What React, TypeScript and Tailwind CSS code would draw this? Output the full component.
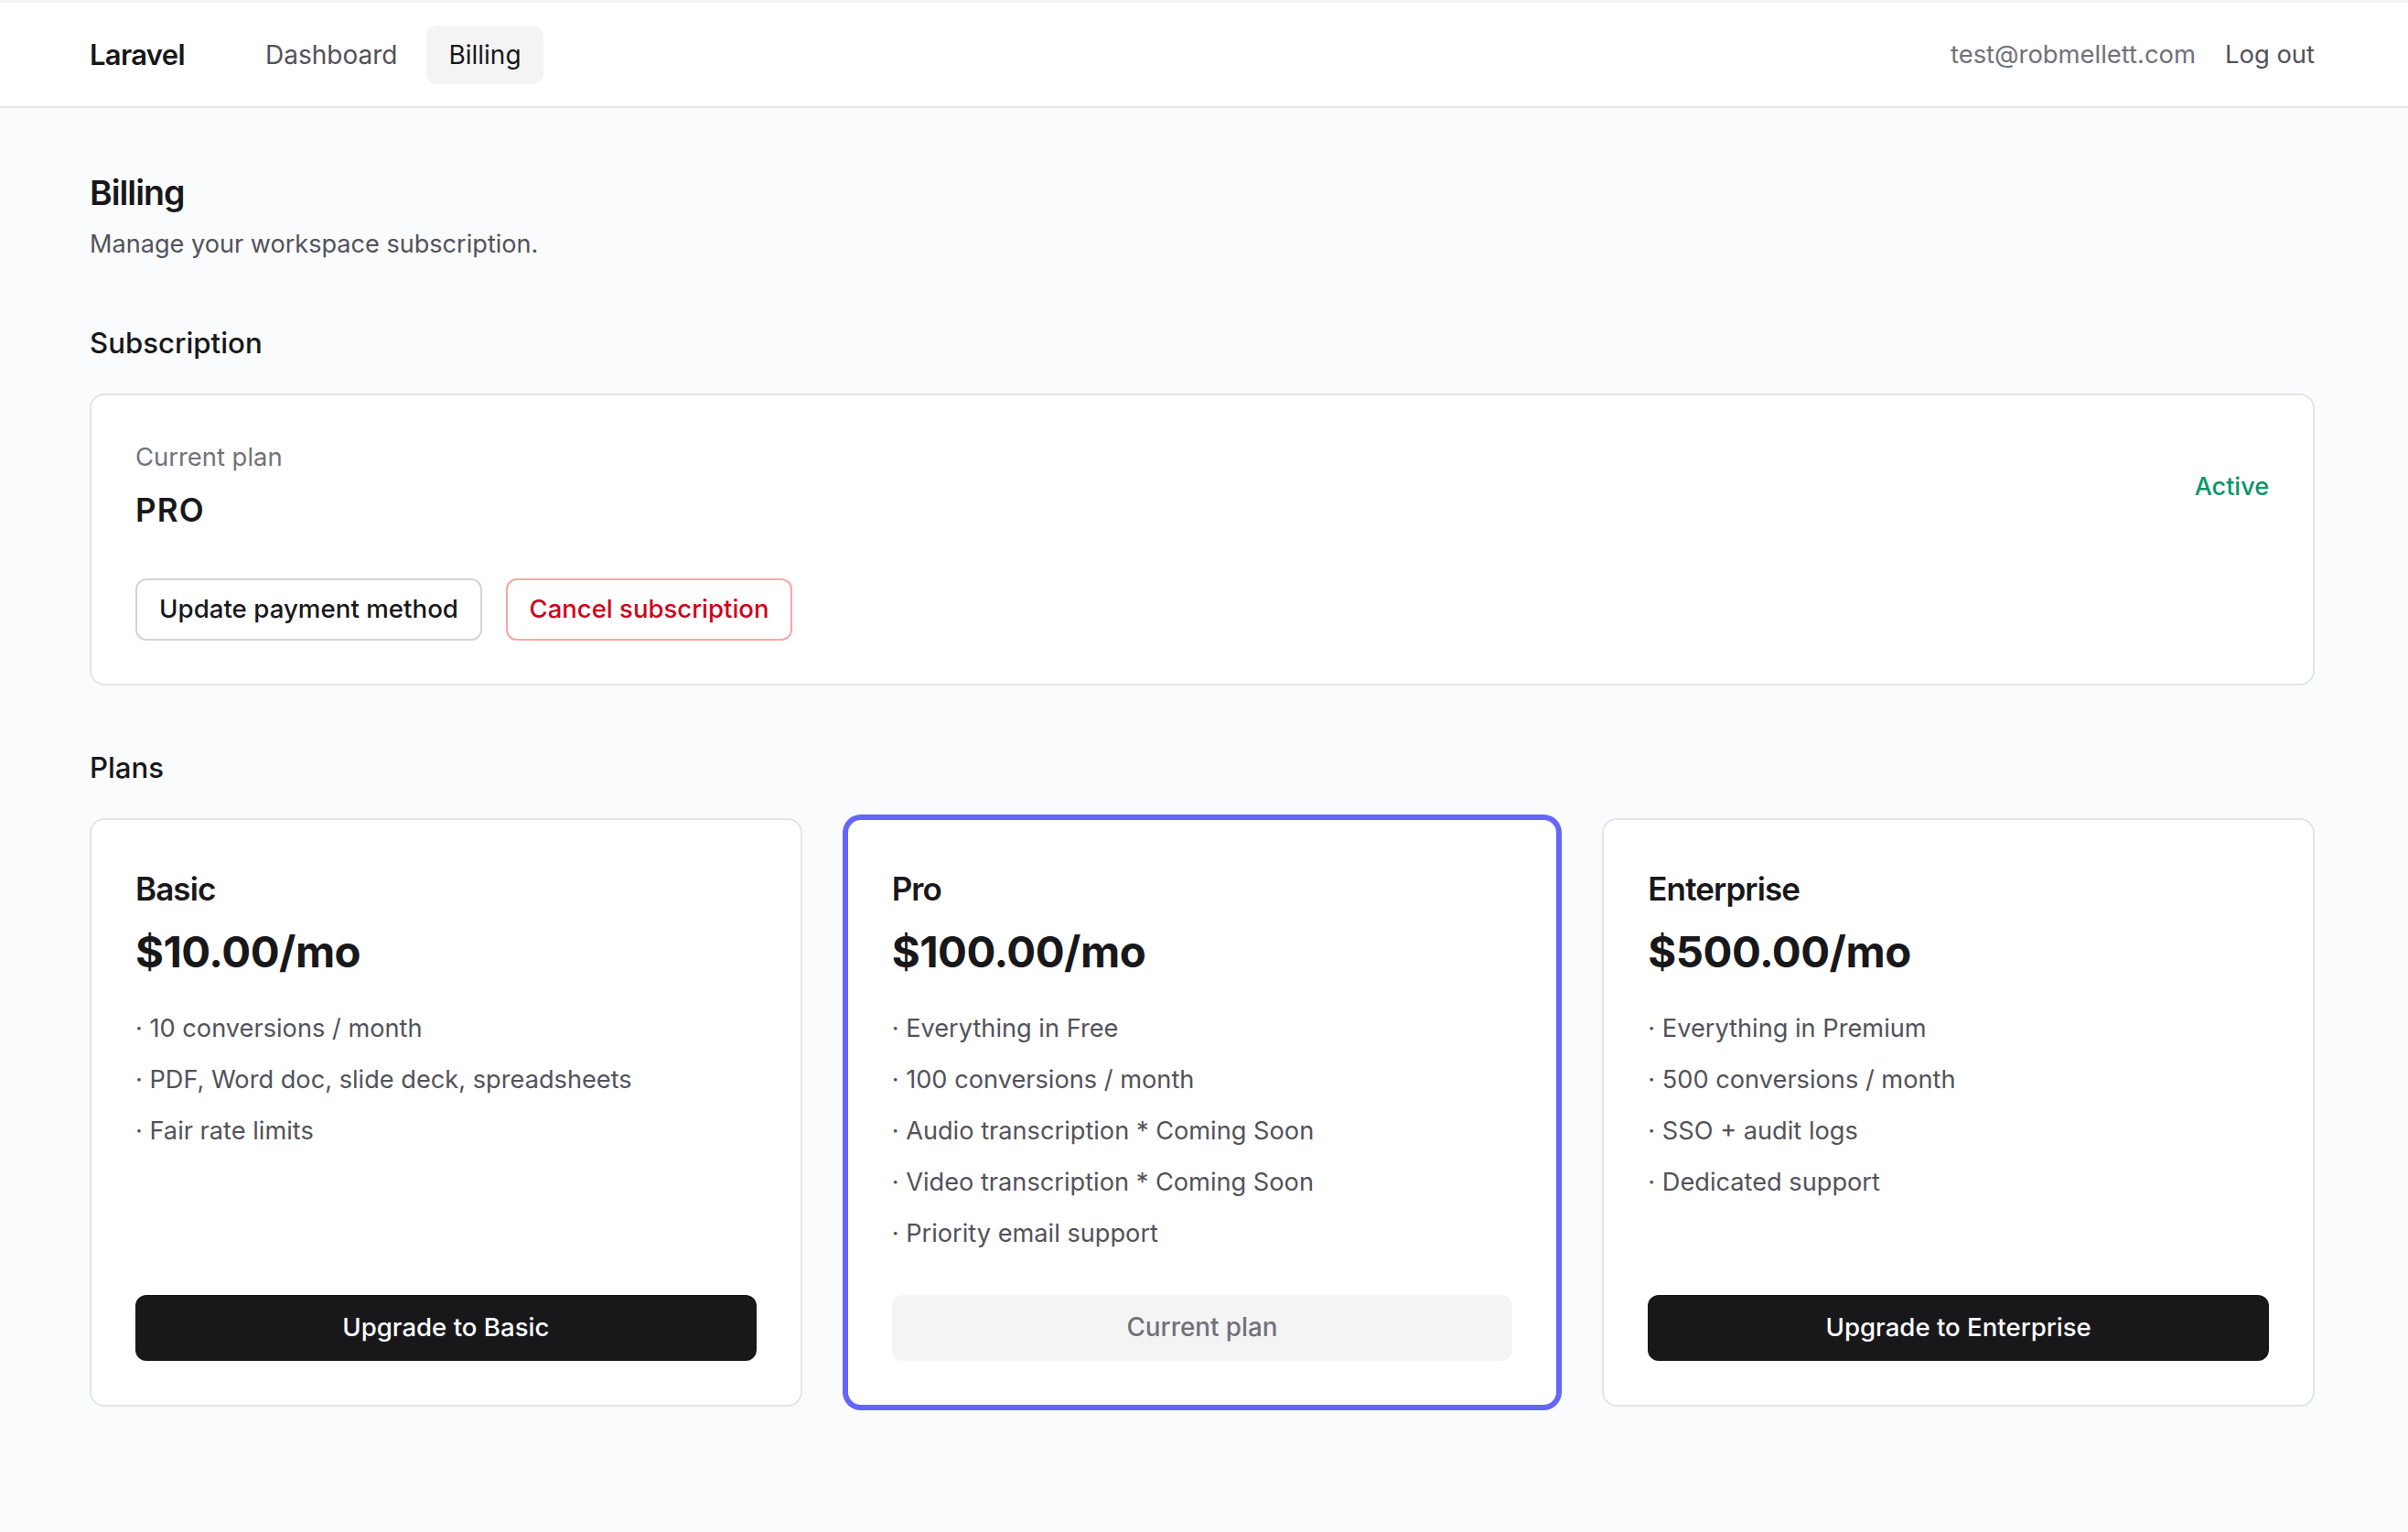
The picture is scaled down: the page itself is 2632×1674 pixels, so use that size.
import React from "react";

const plans = [
  { name: "Basic", price: "$10.00/mo", cta: "Upgrade to Basic", feats: ["10 conversions / month", "PDF, Word doc, slide deck, spreadsheets", "Fair rate limits"] },
  { name: "Pro", price: "$100.00/mo", cta: "Current plan", current: true, feats: ["Everything in Free", "100 conversions / month", "Audio transcription * Coming Soon", "Video transcription * Coming Soon", "Priority email support"] },
  { name: "Enterprise", price: "$500.00/mo", cta: "Upgrade to Enterprise", feats: ["Everything in Premium", "500 conversions / month", "SSO + audit logs", "Dedicated support"] },
];

export default function App() {
  return (
    <div className="min-h-[1674px] bg-[#fafbfc] font-['Inter',sans-serif] text-[#18181b] antialiased">
      <div className="h-[3px] bg-[#f4f4f5]" />
      <nav className="h-[115px] bg-white border-b-2 border-[#e4e4e7] flex items-center justify-between pl-[98px] pr-[102px]">
        <div className="flex items-center">
          <span className="mt-[2px] text-[31px] font-semibold tracking-[-0.7px] w-[168px]">Laravel</span>
          <div className="flex items-center gap-[8px]">
            <a className="h-[64px] px-6 rounded-[12px] flex items-center text-[28px] text-[#52525b]">Dashboard</a>
            <a className="h-[64px] px-6 rounded-[12px] flex items-center text-[28px] bg-[#f4f4f5]">Billing</a>
          </div>
        </div>
        <div className="flex items-center gap-[32px] text-[27.4px]">
          <span className="text-[#71717a]">test@robmellett.com</span>
          <a className="text-[#52525b]">Log out</a>
        </div>
      </nav>
      <main className="pl-[98px] pr-[102px] pt-[65px]">
        <h1 className="text-[37.5px] leading-[56px] font-semibold tracking-[-1px]">Billing</h1>
        <p className="mt-[8px] text-[27.1px] leading-[40px] text-[#52525b]">Manage your workspace subscription.</p>
        <h2 className="mt-[64px] text-[31.2px] leading-[48px] font-medium">Subscription</h2>
        <section className="mt-[31px] h-[319px] bg-white border-2 border-[#e4e4e7] rounded-[16px] px-[48px] pt-[47px]">
          <div className="flex items-start justify-between">
            <div>
              <div className="text-[27.4px] leading-[40px] text-[#71717a]">Current plan</div>
              <div className="mt-[18px] text-[35px] leading-[40px] font-semibold tracking-[1.2px]">PRO</div>
            </div>
            <div className="mt-[33px] text-[27px] leading-[40px] font-medium text-[#059669]">Active</div>
          </div>
          <div className="mt-[55px] flex gap-[26px]">
            <button className="h-[68px] w-[379px] rounded-[12px] border-2 border-[#d4d4d8] bg-white text-[27.7px] font-medium">Update payment method</button>
            <button className="h-[68px] w-[313px] rounded-[12px] border-2 border-[#fca5a5] bg-white text-[27.5px] font-medium text-[#d0021b]">Cancel subscription</button>
          </div>
        </section>
        <h2 className="mt-[66px] text-[31.2px] leading-[48px] font-medium">Plans</h2>
        <div className="mt-[31px] grid grid-cols-3 gap-[48px]">
          {plans.map((p) => (
            <div key={p.name} className={p.current ? "h-[643px] bg-white rounded-[16px] border-2 border-[#6366f6] ring-4 ring-[#6366f6] px-[48px] pt-[47px] pb-[48px] flex flex-col" : "h-[643px] bg-white rounded-[16px] border-2 border-[#e4e4e7] px-[48px] pt-[47px] pb-[48px] flex flex-col"}>
              <div className="text-[35px] leading-[56px] font-semibold tracking-[-0.9px]">{p.name}</div>
              <div className="mt-[9px] text-[47.3px] leading-[64px] font-bold tracking-[-0.5px]">{p.price}</div>
              <ul className="mt-[32px] flex-1 text-[27.2px] leading-[40px] text-[#52525b] flex flex-col gap-[16px]">
                {p.feats.map((f) => <li key={f}>· {f}</li>)}
              </ul>
              <button className={p.current ? "h-[72px] rounded-[12px] bg-[#f4f4f5] text-[27.8px] font-medium text-[#71717a]" : "h-[72px] rounded-[12px] bg-[#18181b] text-[27.6px] font-medium text-white"}>{p.cta}</button>
            </div>
          ))}
        </div>
      </main>
    </div>
  );
}
